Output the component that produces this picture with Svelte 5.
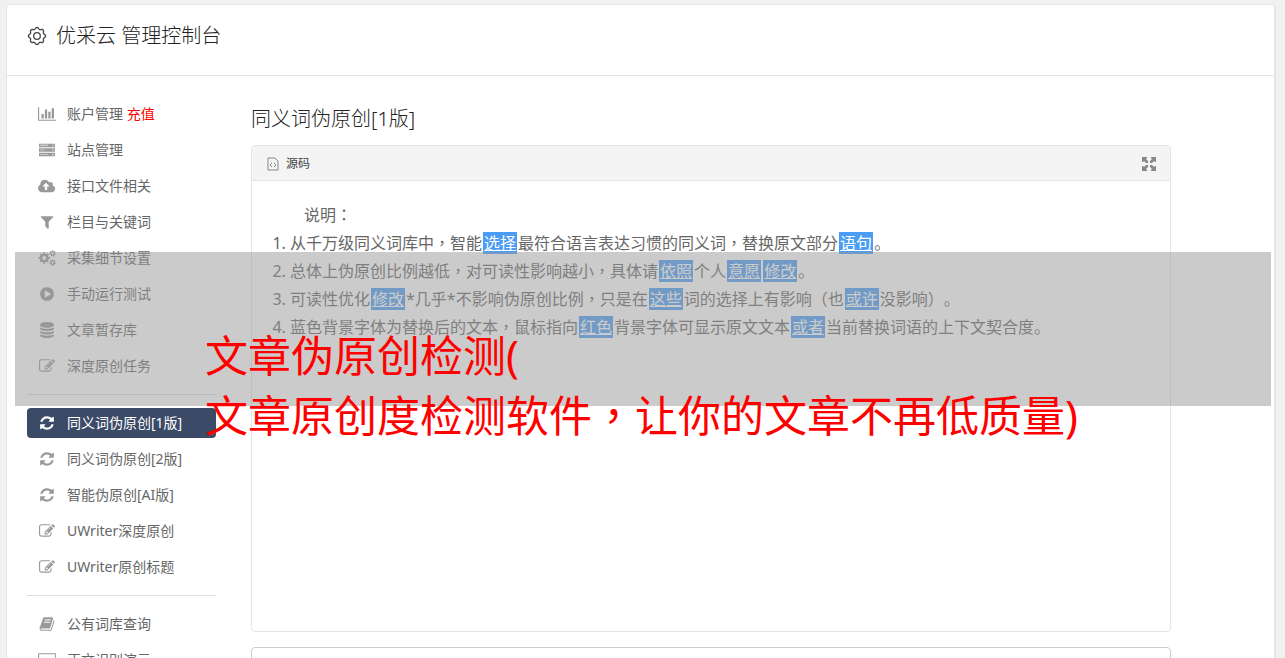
<script lang="ts">
	type Icon = { w: number; d: string };

	const icons: Record<string, Icon> = {
		chart: { w: 2048, d: 'M640 896v512h-256v-512h256zm384-512v1024h-256v-1024h256zm1024 1152v128h-2048v-1536h128v1408h1920zm-640-896v768h-256v-768h256zm384-384v1152h-256v-1152h256z' },
		server: { w: 1792, d: 'M0 192h1792v384h-1792zm128 128v64h896v-64zm1376-16v128h128v-128zM0 704h1792v384h-1792zm128 160v64h512v-64zm1376-32v128h128v-128zM0 1216h1792v384h-1792zm128 160v64h896v-64zm1376-32v128h128v-128z' },
		upload: { w: 2048, d: 'M1280 928q0-14-9-23l-352-352q-9-9-23-9t-23 9l-351 351q-10 12-10 24 0 14 9 23t23 9h224v352q0 13 9.5 22.5t22.5 9.5h192q13 0 22.5-9.5t9.5-22.5v-352h224q13 0 22.5-9.5t9.5-22.5zm640 288q0 159-112.5 271.5t-271.5 112.5h-1088q-185 0-316.5-131.5t-131.5-316.5q0-130 70-240t188-165q-2-30-2-43 0-212 150-362t362-150q156 0 285.5 87t188.5 231q71-62 166-62 106 0 181 75t75 181q0 76-41 138 130 31 213.5 135.5t83.5 238.5z' },
		filter: { w: 1792, d: 'M1595 295q17 41-14 70l-493 493v742q0 42-39 59-13 5-25 5-27 0-45-19l-256-256q-19-19-19-45v-486l-493-493q-31-29-14-70 17-39 59-39h1280q42 0 59 39z' },
		cogs: { w: 2048, d: cog(700, 896, 8, 640, 500, 230) + cog(1640, 390, 7, 370, 270, 125) + cog(1640, 1410, 7, 370, 270, 125) },
		play: { w: 1792, d: 'M896 128q209 0 385.5 103t279.5 279.5 103 385.5-103 385.5-279.5 279.5-385.5 103-385.5-103-279.5-279.5-103-385.5 103-385.5 279.5-279.5 385.5-103zm384 823q32-18 32-55t-32-55l-544-320q-31-19-64-1-32 19-32 56v640q0 37 32 56 16 8 32 8 17 0 32-9z' },
		database: { w: 1792, d: 'M896 768q237 0 443-43t325-127v170q0 69-103 128t-280 93.5-385 34.5-385-34.5-280-93.5-103-128v-170q119 84 325 127t443 43zm0 768q237 0 443-43t325-127v170q0 69-103 128t-280 93.5-385 34.5-385-34.5-280-93.5-103-128v-170q119 84 325 127t443 43zm0-384q237 0 443-43t325-127v170q0 69-103 128t-280 93.5-385 34.5-385-34.5-280-93.5-103-128v-170q119 84 325 127t443 43zm0-1152q208 0 385 34.5t280 93.5 103 128v128q0 69-103 128t-280 93.5-385 34.5-385-34.5-280-93.5-103-128v-128q0-69 103-128t280-93.5 385-34.5z' },
		edit: { w: 1792, d: 'M888 1184l116-116-152-152-116 116v56h96v96h56zm440-720q-16-16-33 1l-350 350q-17 17-1 33t33-1l350-350q17-17 1-33zm80 594v190q0 119-84.5 203.5t-203.5 84.5h-832q-119 0-203.5-84.5t-84.5-203.5v-832q0-119 84.5-203.5t203.5-84.5h832q63 0 117 25 15 7 18 23 3 17-9 29l-49 49q-14 14-32 8-23-6-45-6h-832q-66 0-113 47t-47 113v832q0 66 47 113t113 47h832q66 0 113-47t47-113v-126q0-13 9-22l64-64q15-15 35-7t20 29zm-96-738l288 288-672 672h-288v-288zm444 132l-92 92-288-288 92-92q28-28 68-28t68 28l152 152q28 28 28 68t-28 68z' },
		refresh: { w: 1792, d: 'M1639 1056q0 5-1 7-64 268-268 434.5t-478 166.5q-146 0-282.5-55t-243.5-157l-129 129q-19 19-45 19t-45-19-19-45v-448q0-26 19-45t45-19h448q26 0 45 19t19 45-19 45l-137 137q71 66 161 102t187 36q134 0 250-65t186-179q11-17 53-117 8-23 30-23h192q13 0 22.5 9.5t9.5 22.5zm25-800v448q0 26-19 45t-45 19h-448q-26 0-45-19t-19-45 19-45l138-138q-148-137-349-137-134 0-250 65t-186 179q-11 17-53 117-8 23-30 23h-199q-13 0-22.5-9.5t-9.5-22.5v-7q65-268 270-434.5t480-166.5q146 0 284 55.5t245 156.5l130-129q19-19 45-19t45 19 19 45z' },
		book: { w: 1792, d: 'M1703 478q40 57 18 129l-275 906q-19 64-76.5 107.5t-122.5 43.5h-923q-77 0-148.5-53.5t-99.5-131.5q-24-67-2-127 0-4 3-27t4-37q1-8-3-21.5t-3-19.5q2-11 8-21t16.5-23.5 16.5-23.5q23-38 45-91.5t30-91.5q3-10 .5-30t-.5-28q3-11 17-28t17-23q21-36 42-92t25-90q1-9-2.5-32t.5-28q4-13 22-30.5t22-22.5q19-26 42.5-84.5t27.5-96.5q1-8-3-25.5t-2-26.5q2-8 9-18t18-23 17-21q8-12 16.5-30.5t15-35 16-36 19.5-32 26.5-23.5 36-11.5 47.5 5.5l-1 3q38-9 51-9h761q74 0 114 56t18 130l-274 906q-36 119-71.5 153.5t-128.5 34.5h-869q-27 0-38 15-11 16-1 43 24 70 144 70h923q29 0 56-15.5t35-41.5l300-987q7-22 5-57 38 15 59 43zm-1064 2q-4 13 2 22.5t20 9.5h608q13 0 25.5-9.5t16.5-22.5l21-64q4-13-2-22.5t-20-9.5h-608q-13 0-25.5 9.5t-16.5 22.5zm-83 256q-4 13 2 22.5t20 9.5h608q13 0 25.5-9.5t16.5-22.5l21-64q4-13-2-22.5t-20-9.5h-608q-13 0-25.5 9.5t-16.5 22.5z' },
		desktop: { w: 2048, d: 'M160 128h1728q160 0 160 160v1088q0 160-160 160h-1728q-160 0-160-160v-1088q0-160 160-160zm0 128q-32 0-32 32v1088q0 32 32 32h1728q32 0 32-32v-1088q0-32-32-32z' }
	};

	const groups = [
		[
			{ icon: 'chart', label: '账户管理', extra: '充值' },
			{ icon: 'server', label: '站点管理' },
			{ icon: 'upload', label: '接口文件相关' },
			{ icon: 'filter', label: '栏目与关键词' },
			{ icon: 'cogs', label: '采集细节设置' },
			{ icon: 'play', label: '手动运行测试' },
			{ icon: 'database', label: '文章暂存库' },
			{ icon: 'edit', label: '深度原创任务' }
		],
		[
			{ icon: 'refresh', label: '同义词伪原创[1版]', active: true },
			{ icon: 'refresh', label: '同义词伪原创[2版]' },
			{ icon: 'refresh', label: '智能伪原创[AI版]' },
			{ icon: 'edit', label: 'UWriter深度原创' },
			{ icon: 'edit', label: 'UWriter原创标题' }
		],
		[
			{ icon: 'book', label: '公有词库查询' },
			{ icon: 'desktop', label: '正文识别演示' }
		]
	];

	// replaced words are wrapped in braces
	const notes = [
		'从千万级同义词库中，智能{选择}最符合语言表达习惯的同义词，替换原文部分{语句}。',
		'总体上伪原创比例越低，对可读性影响越小，具体请{依照}个人{意愿}{修改}。',
		'可读性优化{修改}*几乎*不影响伪原创比例，只是在{这些}词的选择上有影响（也{或许}没影响）。',
		'蓝色背景字体为替换后的文本，鼠标指向{红色}背景字体可显示原文文本{或者}当前替换词语的上下文契合度。'
	].map((line) => line.split(/[{}]/));

	function point(cx: number, cy: number, r: number, a: number) {
		return `${(cx + r * Math.sin(a)).toFixed(2)} ${(cy - r * Math.cos(a)).toFixed(2)}`;
	}

	function cog(cx: number, cy: number, teeth: number, outer: number, inner: number, hole: number) {
		const step = (Math.PI * 2) / teeth;
		const pts: string[] = [];
		for (let i = 0; i < teeth; i++) {
			const a = i * step;
			pts.push(point(cx, cy, inner, a - step * 0.28));
			pts.push(point(cx, cy, outer, a - step * 0.2));
			pts.push(point(cx, cy, outer, a + step * 0.2));
			pts.push(point(cx, cy, inner, a + step * 0.28));
		}
		return `M${pts.join('L')}ZM${cx - hole} ${cy}a${hole} ${hole} 0 1 0 ${hole * 2} 0a${hole} ${hole} 0 1 0 ${-hole * 2} 0z`;
	}

	// soft eight-lobed outline for the title gear
	const gear = 'M' + Array.from({ length: 96 }, (_, i) => {
		const a = (i / 96) * Math.PI * 2;
		return point(10, 10, 7.8 + 0.8 * Math.cos(a * 8), a);
	}).join('L') + 'Z';
</script>

<!-- commas and colons sit in the middle of their cell -->
{#snippet zh(text: string)}{#each text.split(/([，：])/) as bit, i}{#if i % 2}<span class="mid">{bit}</span>{:else}{bit}{/if}{/each}{/snippet}

<div class="page">
	<div class="card">
		<header>
			<svg class="gear" viewBox="0 0 20 20" aria-hidden="true">
				<path d={gear} />
				<circle cx="10" cy="10" r="3.3" />
			</svg>
			<h1>优采云 管理控制台</h1>
		</header>

		<div class="columns">
			<nav>
				{#each groups as group}
					<ul>
						{#each group as item}
							<li>
								<a href="#menu" class:active={item.active}>
									<span class="icon">
										<svg viewBox="0 0 {icons[item.icon].w} 1792" width={icons[item.icon].w / 112} height="16" aria-hidden="true">
											<path fill-rule="evenodd" d={icons[item.icon].d} />
										</svg>
									</span>
									<span class="label">{item.label} {#if item.extra}<span class="extra">{item.extra}</span>{/if}</span>
								</a>
							</li>
						{/each}
					</ul>
				{/each}
			</nav>

			<main>
				<h2>同义词伪原创[1版]</h2>
				<section class="editor">
					<div class="toolbar">
						<button type="button">
							<svg viewBox="0 0 12 14" width="12" height="14" aria-hidden="true">
								<path d="M1 1h7l3 3v9H1zM5 6L3 8l2 2M7 6l2 2-2 2" />
							</svg>
							源码
						</button>
						<button type="button" aria-label="全屏">
							<svg class="expand" viewBox="0 0 14 14" width="14" height="14" aria-hidden="true">
								<path d="M0 0h5v1L4 2l2 2v2H4L2 4 1 5H0zM14 0H9v1l1 1-2 2v2h2l2-2 1 1h1zM0 14h5v-1l-1-1 2-2V8H4l-2 2-1-1H0zM14 14H9v-1l1-1-2-2V8h2l2 2 1-1h1z" />
							</svg>
						</button>
					</div>
					<div class="content">
						<p>{@render zh('说明：')}</p>
						<ol>
							{#each notes as parts}
								<li>{#each parts as part, i}{#if i % 2}<u>{part}</u>{:else}{@render zh(part)}{/if}{/each}</li>
							{/each}
						</ol>
					</div>
				</section>
				<section class="result"></section>
			</main>
		</div>
	</div>

	<div class="banner">
		文章伪原创检测(<br />{@render zh('文章原创度检测软件，让你的文章不再低质量)')}
	</div>
</div>

<style>
	:global(body) {
		margin: 0;
		background: #f1f1f1;
	}

	.page {
		position: relative;
		box-sizing: border-box;
		height: 100vh;
		padding: 4px 9px 0 6px;
		overflow: hidden;
		font-family: "Noto Sans", "Noto Sans CJK SC", sans-serif;
		font-size: 14px;
		color: #666;
		text-spacing-trim: space-all;
	}

	.card {
		background: #fff;
		border: 1px solid #e5e5e5;
		border-right-width: 2px;
		border-radius: 4px;
	}

	.mid {
		font-family: "Noto Sans CJK TC", sans-serif;
		line-height: 1;
	}

	header {
		display: flex;
		align-items: center;
		gap: 9px;
		height: 62px;
		padding: 0 20px 8px;
		border-bottom: 1px solid #e5e5e5;
	}

	.gear {
		width: 20px;
		height: 20px;
		fill: none;
		stroke: #444;
		stroke-width: 1.3;
	}

	h1,
	h2 {
		margin: 0;
		font-size: 20px;
		line-height: 28px;
		font-weight: 300;
		color: #222;
	}

	.columns {
		display: flex;
		gap: 35px;
		padding: 23px 103px 30px 20px;
	}

	nav {
		flex: none;
		width: 189px;
	}

	ul {
		display: flex;
		flex-direction: column;
		gap: 6px;
		margin: 0;
		padding: 0;
		list-style: none;
	}

	ul + ul {
		margin-top: 13px;
		padding-top: 13px;
		border-top: 1px solid #ddd;
	}

	nav a {
		display: flex;
		align-items: center;
		gap: 10px;
		height: 30px;
		padding-left: 10px;
		border-radius: 4px;
		color: #666;
		text-decoration: none;
		white-space: nowrap;
	}

	nav a.active {
		background: #3b4a66;
		color: #fff;
	}

	.label {
		padding-bottom: 2px;
	}

	.icon {
		display: flex;
		justify-content: center;
		width: 20px;
		fill: #999;
	}

	.active .icon {
		fill: #fff;
	}

	.extra {
		color: #f00;
	}

	main {
		flex: 1;
		min-width: 0;
		padding-top: 6px;
	}

	.editor {
		min-height: 485px;
		margin-top: 12px;
		border: 1px solid #e5e5e5;
		border-radius: 4px;
	}

	.toolbar {
		display: flex;
		align-items: center;
		justify-content: space-between;
		height: 34px;
		padding: 0 14px 0 15px;
		background: #f4f4f4;
		border-bottom: 1px solid #e5e5e5;
		border-radius: 4px 4px 0 0;
	}

	button {
		display: flex;
		align-items: center;
		gap: 7px;
		padding: 0;
		border: 0;
		background: none;
		font: inherit;
		font-size: 12px;
		color: #444;
	}

	button svg {
		padding-top: 2px;
		fill: none;
		stroke: #888;
	}

	button .expand {
		fill: #888;
		stroke: none;
	}

	.content {
		padding: 20px;
		font-size: 16px;
		line-height: 28px;
	}

	p {
		margin: 0;
		text-indent: 2em;
	}

	ol {
		margin: 0;
		padding-left: 18px;
	}

	u {
		margin: 0 1px;
		padding: 0 1px;
		background: #4a9cf5;
		color: #fff;
	}

	.result {
		height: 120px;
		margin-top: 15px;
		border: 1px solid #ccc;
		border-radius: 4px;
	}

	.banner {
		position: absolute;
		top: 252px;
		left: 15px;
		right: 14px;
		box-sizing: border-box;
		height: 154px;
		padding: 74px 0 0 190px;
		background: rgba(151, 151, 151, 0.5);
		color: #f00;
		font-size: 43px;
		line-height: 60px;
		white-space: nowrap;
	}
</style>
